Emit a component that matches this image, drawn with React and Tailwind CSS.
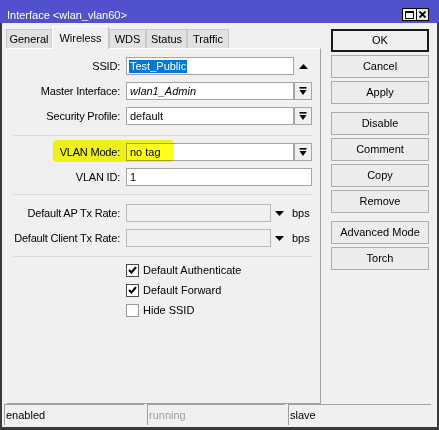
import React from "react";

const tabs = [
	{ name: "General", width: "w-[46px]" },
	{ name: "Wireless", width: "w-[57px]", active: true },
	{ name: "WDS", width: "w-[37px]" },
	{ name: "Status", width: "w-[41px]" },
	{ name: "Traffic", width: "w-[42px]" },
];

const buttonGroups = [
	["OK", "Cancel", "Apply"],
	["Disable", "Comment", "Copy", "Remove"],
	["Advanced Mode", "Torch"],
];

const DropIcon = () => (
	<svg width="8" height="9" viewBox="0 0 8 9">
		<rect x="0.5" y="0" width="7" height="1.6" fill="#000" />
		<polygon points="0.5,3 7.5,3 4,8" fill="#000" />
	</svg>
);

const TriDown = () => (
	<svg width="9" height="5" viewBox="0 0 9 5">
		<polygon points="0,0 9,0 4.5,5" fill="#000" />
	</svg>
);

const TriUp = () => (
	<svg width="9" height="5" viewBox="0 0 9 5">
		<polygon points="0,5 9,5 4.5,0" fill="#000" />
	</svg>
);

const Row = ({ label, children, extra }) => (
	<div className="relative flex h-[18px] items-center">
		{extra}
		<div className="w-[113px] text-right tracking-[-0.2px]">{label}</div>
		<div className="ml-[6px] flex h-full w-[186px] items-center">
			{children}
		</div>
	</div>
);

const Input = ({ children, width = "w-[168px]", disabled }) => (
	<div
		className={
			disabled
				? "flex h-full items-center border border-[#b9b9b9] bg-[#f0f0f0] pl-[2px] " + width
				: "flex h-full items-center border border-[#a5a5a5] bg-white pl-[2px] " + width
		}
	>
		{children}
	</div>
);

const Separator = ({ className }) => (
	<div className={"ml-[6px] h-px w-[299px] bg-[#d9d9d9] " + className} />
);

const Check = ({ label, checked }) => (
	<div className="flex h-[20px] items-center pl-[119px]">
		<div
			className={
				checked
					? "flex h-[13px] w-[13px] items-center justify-center border border-[#4a4a4a] bg-white"
					: "flex h-[13px] w-[13px] items-center justify-center border border-[#9a9a9a] bg-white"
			}
		>
			{checked && (
				<svg width="9" height="8" viewBox="0 0 9 8">
					<polyline
						points="1,4 3.5,6.5 8,1.2"
						fill="none"
						stroke="#000"
						strokeWidth="2"
					/>
				</svg>
			)}
		</div>
		<span className="ml-[4px]">{label}</span>
	</div>
);

const App = () => {
	return (
		<div className="flex h-[430px] w-[439px] flex-col bg-[#f0f0f0] font-['Liberation_Sans',Arial,sans-serif] text-[11px] leading-[13px] text-black">
			{/* title bar */}
			<div className="flex h-[23px] shrink-0 items-start bg-[#5151cd] pl-[7px] pr-[10px] text-white">
				<span className="mt-[9px]">Interface &lt;wlan_vlan60&gt;</span>
				<div className="ml-auto mt-[8px] flex">
					<div className="flex h-[13px] w-[15px] items-center justify-center border border-black bg-[#f4f4f4]">
						<div className="h-[8px] w-[9px] border border-black border-t-2" />
					</div>
					<div className="flex h-[13px] w-[12px] items-center justify-center border border-l-0 border-black bg-[#e8e8e8]">
						<svg width="7" height="7" viewBox="0 0 7 7">
							<path d="M0.5 0.5 L6.5 6.5 M6.5 0.5 L0.5 6.5" stroke="#000" strokeWidth="1.8" />
						</svg>
					</div>
				</div>
			</div>

			{/* body */}
			<div className="flex flex-1 flex-col border-x-2 border-b-[3px] border-[#3a3a3a] pt-[3px]">
				<div className="flex pl-[4px]">
					<div className="flex w-[315px] flex-col">
						<div className="relative z-10 flex h-[22px] items-start">
							{tabs.map((tab) =>
								tab.active ? (
									<div
										key={tab.name}
										className={"flex h-[23px] items-center justify-center border border-b-0 border-l-white border-t-white border-r-[#c4c4c4] bg-[#f0f0f0] " + tab.width}
									>
										{tab.name}
									</div>
								) : (
									<div
										key={tab.name}
										className={"mt-[3px] flex h-[19px] items-center justify-center border border-b-0 border-[#cacaca] bg-[#e1e1e1] " + tab.width}
									>
										{tab.name}
									</div>
								)
							)}
						</div>

						<div className="flex h-[356px] flex-col border border-b-[#a0a0a0] border-l-white border-r-[#a0a0a0] border-t-white pr-[8px] pt-[8px]">
							<div className="flex flex-col gap-[7px]">
								<Row label="SSID:">
									<Input>
										<span className="bg-[#0078d7] px-px text-white">Test_Public</span>
									</Input>
									<div className="flex w-[18px] justify-center">
										<TriUp />
									</div>
								</Row>
								<Row label="Master Interface:">
									<Input>
										<span className="pl-px italic">wlan1_Admin</span>
									</Input>
									<div className="ml-auto flex h-full w-[18px] items-center justify-center border border-[#a5a5a5] bg-[#f0f0f0]">
										<DropIcon />
									</div>
								</Row>
								<Row label="Security Profile:">
									<Input>
										<span className="pl-px">default</span>
									</Input>
									<div className="ml-auto flex h-full w-[18px] items-center justify-center border border-[#a5a5a5] bg-[#f0f0f0]">
										<DropIcon />
									</div>
								</Row>
							</div>

							<Separator className="mt-[10px]" />

							<div className="mt-[7px] flex flex-col gap-[7px]">
								<Row
									label="VLAN Mode:"
									extra={
										<div className="pointer-events-none absolute left-[46px] top-[-3px] z-10 h-[22px] w-[121px] rounded-[4px] bg-[#ffff1a] mix-blend-multiply" />
									}
								>
									<Input>
										<span className="pl-px">no tag</span>
									</Input>
									<div className="ml-auto flex h-full w-[18px] items-center justify-center border border-[#a5a5a5] bg-[#f0f0f0]">
										<DropIcon />
									</div>
								</Row>
								<Row label="VLAN ID:">
									<Input width="w-[186px]">
										<span className="pl-px">1</span>
									</Input>
								</Row>
							</div>

							<Separator className="mt-[8px]" />

							<div className="mt-[9px] flex flex-col gap-[7px]">
								<Row label="Default AP Tx Rate:">
									<Input width="w-[145px]" disabled />
									<div className="ml-[4px] flex">
										<TriDown />
									</div>
									<span className="ml-[8px]">bps</span>
								</Row>
								<Row label="Default Client Tx Rate:">
									<Input width="w-[145px]" disabled />
									<div className="ml-[4px] flex">
										<TriDown />
									</div>
									<span className="ml-[8px]">bps</span>
								</Row>
							</div>

							<Separator className="mt-[9px]" />

							<div className="mt-[3px] flex flex-col">
								<Check label="Default Authenticate" checked />
								<Check label="Default Forward" checked />
								<Check label="Hide SSID" />
							</div>
						</div>
					</div>

					<div className="ml-[10px] mt-[3px] flex w-[98px] flex-col gap-[8px]">
						{buttonGroups.map((group, i) => (
							<div key={i} className="flex flex-col gap-[3px]">
								{group.map((label) => (
									<div
										key={label}
										className={
											label === "OK"
												? "flex h-[23px] items-center justify-center border border-[#1a1a1a] bg-[#f0f0f0] shadow-[inset_0_0_0_1px_#1a1a1a]"
												: "flex h-[23px] items-center justify-center border border-[#adadad] bg-[#ececec]"
										}
									>
										{label}
									</div>
								))}
							</div>
						))}
					</div>
				</div>

				{/* status bar */}
				<div className="flex h-[21px] gap-[3px] pl-[2px]">
					<div className="flex w-[140px] items-center border-l border-t border-[#a0a0a0] pl-px">
						enabled
					</div>
					<div className="flex w-[138px] items-center border-l border-t border-[#a0a0a0] pl-px text-[#a0a0a0]">
						running
					</div>
					<div className="flex w-[143px] items-center border-l border-t border-[#a0a0a0] pl-px">
						slave
					</div>
				</div>
			</div>
		</div>
	);
};

export default App;
